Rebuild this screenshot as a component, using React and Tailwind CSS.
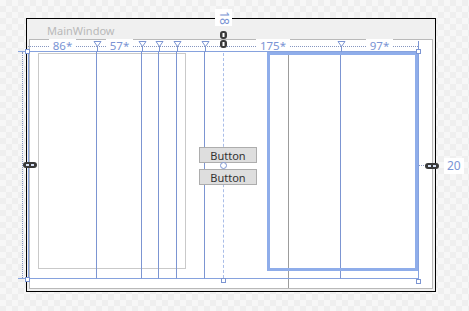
import React from 'react';

// divider marker on the ruler: outlined triangle with the line stub down to the grid top
const Tri = ({ className }) => (
    <div className={`absolute w-[9px] flex flex-col items-center ${className}`}>
        <svg width="9" height="6" viewBox="0 0 9 6">
            <path d="M1 0.5 H8 L4.5 5.5 Z" fill="white" stroke="#7c95d2" strokeWidth="1" />
        </svg>
        <div className="w-px h-[5px] bg-[#7c95d2]" />
    </div>
);

// grid column: ruler cell (dotted line, star label, divider triangle) over the column body
const GridCol = ({ width, label, last, first }) => (
    <div className={`flex flex-col ${width}`}>
        <div className="relative h-[12px] flex">
            <div className="flex-1 mt-[7px] h-0 border-t border-dotted border-[#8596c0]" />
            {label && (
                <>
                    <div className="h-[12px] bg-white px-[4px] pt-px flex items-center text-[11.5px] leading-none text-[#7a94d4]">
                        {label}
                    </div>
                    <div className="flex-1 mt-[7px] h-0 border-t border-dotted border-[#8596c0]" />
                </>
            )}
            {last ? (
                <div className="w-px mt-[2px] h-[10px] bg-[#7c95d2]" />
            ) : (
                <Tri className="-right-[5px] top-[2px]" />
            )}
        </div>
        <div
            className={`h-[228px] border-y border-r ${first ? 'border-l border-l-[#86a2de]' : ''} ${
                last ? 'border-[#86a2de]' : 'border-y-[#86a2de] border-r-[#7c95d2]'
            }`}
        />
    </div>
);

const Handle = ({ className }) => (
    <div className={`absolute w-[5px] h-[5px] bg-white border border-[#7c95d2] ${className}`} />
);

const LinkH = ({ className }) => (
    <svg width="14" height="6" viewBox="0 0 14 6" className={`absolute ${className}`}>
        <rect x="0" y="0" width="14" height="6" rx="3" fill="#3a3a3a" />
        <rect x="3" y="2" width="3" height="2" fill="#d8e2f6" />
        <rect x="8" y="2" width="3" height="2" fill="#d8e2f6" />
    </svg>
);

const LinkV = ({ className }) => (
    <svg width="7" height="17" viewBox="0 0 7 17" className={`absolute ${className}`}>
        <rect x="0" y="0" width="7" height="8" rx="3" fill="#3a3a3a" />
        <rect x="0" y="9" width="7" height="8" rx="3" fill="#3a3a3a" />
        <rect x="2.5" y="2" width="2" height="4" fill="#ffffff" />
        <rect x="2.5" y="11" width="2" height="4" fill="#ffffff" />
    </svg>
);

const DesignButton = () => (
    <div className="w-[58px] h-[16px] flex items-center justify-center bg-[#dedede] border border-[#adadad] text-[11px] leading-none text-[#333]">
        Button
    </div>
);

export default function App() {
    return (
        <div
            className="relative w-[469px] h-[311px] overflow-hidden pl-[26px] pt-[18px] bg-[repeating-conic-gradient(#efefef_0_25%,#f7f7f7_0_50%)] bg-[length:12px_12px]"
            style={{ fontFamily: '"Noto Sans", "Open Sans", sans-serif' }}
        >
            {/* window */}
            <div className="w-[410px] h-[274px] border border-black bg-[#f0f0f0] flex flex-col">
                <div className="h-[20px] shrink-0 flex items-start pl-[20px] pt-[6px] text-[11px] leading-none text-[#b9b9b9]">
                    MainWindow
                </div>
                <div className="flex-1 mx-[2px] mb-[2px] border border-[#b9b9b9] bg-white" />
            </div>

            {/* designer adorners */}
            <div className="absolute inset-0">
                {/* inner border element */}
                <div className="absolute left-[38px] top-[53px] w-[148px] h-[216px] border border-[#c9c9c9]" />
                {/* grey divider */}
                <div className="absolute left-[288px] top-[40px] w-px h-[248px] bg-[#9c9c9c]" />

                {/* grid with its column ruler */}
                <div className="absolute left-[28px] top-[39px] flex">
                    <GridCol width="w-[69px]" label="86*" first />
                    <GridCol width="w-[45px]" label="57*" />
                    <GridCol width="w-[17px]" />
                    <GridCol width="w-[18px]" />
                    <GridCol width="w-[28px]" />
                    <GridCol width="w-[136px]" label="175*" />
                    <GridCol width="w-[78px]" label="97*" last />
                </div>

                {/* left margin marker */}
                <div className="absolute left-[18px] top-[51px] w-[10px] h-[228px] flex flex-col">
                    <div className="h-px bg-[#86a2de]" />
                    <div className="flex-1 ml-[4px] border-l border-dotted border-[#8596c0]" />
                    <div className="h-px bg-[#86a2de]" />
                </div>

                {/* center guide */}
                <div className="absolute left-[223px] top-[53px] h-[225px] border-l border-dashed border-[#a9bde8]" />

                {/* selected element */}
                <div className="absolute left-[267px] top-[52px] w-[151px] h-[219px] border-[3px] border-[#8fadea]" />

                {/* buttons */}
                <div className="absolute left-[199px] top-[147px] flex flex-col gap-[6px]">
                    <DesignButton />
                    <DesignButton />
                </div>
                <div className="absolute left-[220px] top-[162px] w-[7px] h-[7px] rounded-full bg-white border border-[#7c95d2]" />

                {/* margin values */}
                <div className="absolute left-[215px] top-[9px] w-[17px] h-[17px] bg-white flex items-center justify-center">
                    <span className="rotate-90 text-[12px] leading-none text-[#7a94d4]">18</span>
                </div>
                <LinkV className="left-[220px] top-[31px]" />
                <LinkH className="left-[23px] top-[162px]" />
                <div className="absolute left-[419px] top-[165px] w-[7px] border-t border-dotted border-[#8596c0]" />
                <LinkH className="left-[425px] top-[163px]" />
                <div className="absolute left-[444px] top-[158px] h-[16px] px-[3px] bg-white flex items-center text-[12px] leading-none text-[#7a94d4]">
                    20
                </div>

                <Handle className="left-[25px] top-[49px]" />
                <Handle className="left-[416px] top-[49px]" />
                <Handle className="left-[25px] top-[277px]" />
                <Handle className="left-[221px] top-[278px]" />
                <Handle className="left-[416px] top-[279px]" />
            </div>
        </div>
    );
}
